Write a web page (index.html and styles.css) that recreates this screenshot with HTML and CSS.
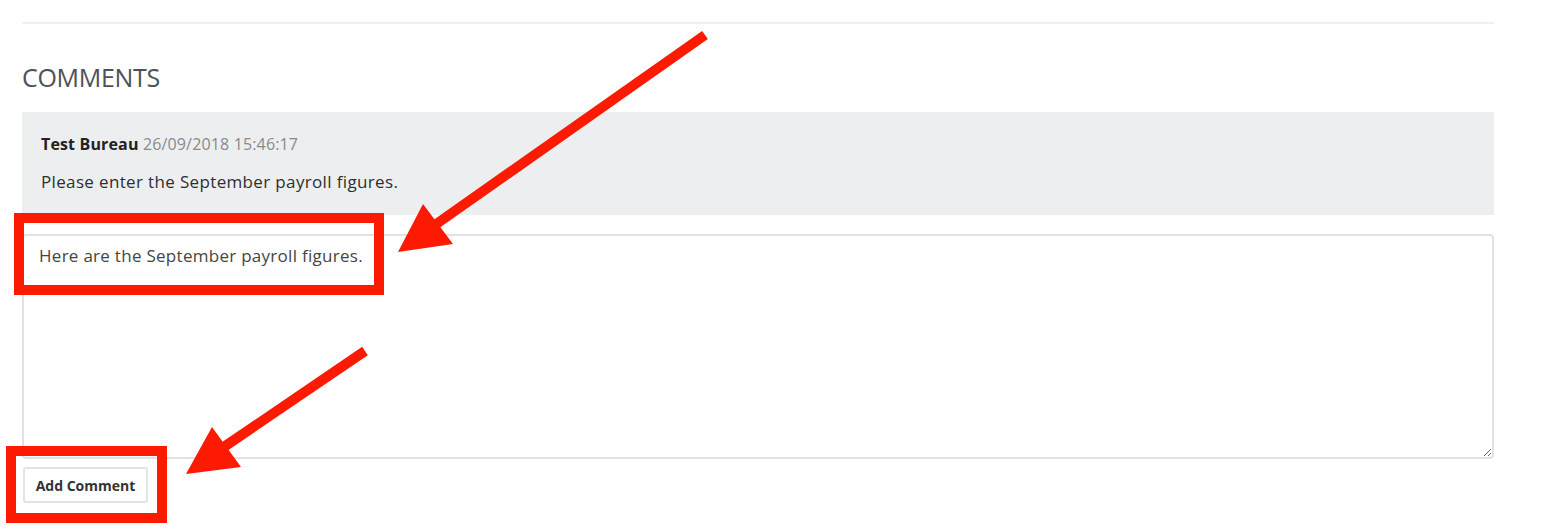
FILE: index.html
```html
<!DOCTYPE html>
<html lang="en">
<head>
  <meta charset="UTF-8" />
  <title>Payroll - Comments</title>
  <meta name="viewport" content="width=device-width, initial-scale=1.0" />
  <link rel="stylesheet" href="styles.css">
</head>
<body>

  <div class="page">
    <hr class="rule">

    <section class="comments">
      <h2 class="comments-title">COMMENTS</h2>

      <!-- Existing comments -->
      <div class="comment">
        <div class="comment-meta">
          <strong>Test Bureau</strong>
          <span class="comment-date">26/09/2018 15:46:17</span>
        </div>
        <p class="comment-text">Please enter the September payroll figures.</p>
      </div>

      <!-- New comment -->
      <textarea class="comment-input">Here are the September payroll figures.</textarea>
      <button class="add-button">Add Comment</button>
    </section>

    <!-- Annotation overlay -->
    <svg class="annotations" width="1554" height="531" viewBox="0 0 1554 531">
      <g fill="none" stroke="#fd1a02" stroke-width="10">
        <rect x="19" y="218" width="360" height="72" />
        <rect x="11" y="451" width="151" height="67" />
        <line x1="705" y1="35" x2="432" y2="227" />
        <line x1="365" y1="351" x2="218" y2="451" />
      </g>
      <g fill="#fd1a02">
        <polygon points="398,252 423,204 453,244" />
        <polygon points="186,474 212,427 241,467" />
      </g>
    </svg>
  </div>

</body>
</html>
```

FILE: styles.css
```css
:root {
  --text: #333;
  --muted: #8a8a8a;
  --heading: #4d5257;
  --line: #dcdcdc;
  --panel: #edeef0;
}

body {
  margin: 0;
  font-family: 'Open Sans', 'Liberation Sans', sans-serif;
  color: var(--text);
  background-color: white;
}

.page {
  position: relative;
  width: 1554px;
  height: 531px;
  overflow: hidden;
}

.rule {
  margin: 22px 60px 0 22px;
  border: none;
  border-top: 2px solid #f0f0f0;
}

.comments {
  display: flex;
  flex-direction: column;
  align-items: flex-start;
  margin: 0 60px 0 22px;
}

.comments-title {
  margin: 35px 0 0 0;
  font-size: 25px;
  font-weight: 400;
  letter-spacing: -0.3px;
  color: var(--heading);
  line-height: 36px;
}

.comment {
  align-self: stretch;
  margin-top: 17px;
  padding: 21px 19px 18px 19px;
  background-color: var(--panel);
  height: 103px;
  box-sizing: border-box;
}

.comment-meta {
  font-size: 16px;
  letter-spacing: 0.15px;
  line-height: 22px;
}

.comment-meta strong {
  color: #222;
}

.comment-date {
  color: var(--muted);
}

.comment-text {
  margin: 16px 0 0 0;
  font-size: 17px;
  letter-spacing: 0.35px;
  line-height: 22px;
  color: #2e2e2e;
}

.comment-input {
  align-self: stretch;
  margin-top: 19px;
  height: 225px;
  box-sizing: border-box;
  padding: 9px 15px;
  border: 2px solid #e2e2e2;
  border-radius: 4px;
  font-family: inherit;
  font-size: 17px;
  letter-spacing: 0.28px;
  line-height: 22px;
  color: #444;
  resize: vertical;
}

.add-button {
  margin-top: 8px;
  margin-left: 1px;
  width: 125px;
  height: 36px;
  background-color: white;
  border: 2px solid #e4e4e4;
  border-radius: 3px;
  font-family: inherit;
  font-size: 14px;
  font-weight: 700;
  color: #333;
  cursor: pointer;
}

.annotations {
  position: absolute;
  top: 0;
  left: 0;
  pointer-events: none;
}
```
